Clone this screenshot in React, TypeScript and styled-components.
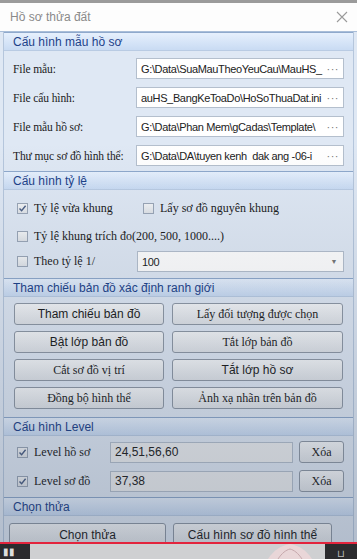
import React from 'react';
import styled, { createGlobalStyle } from 'styled-components';

const GlobalStyle = createGlobalStyle`
  html, body {
    margin: 0;
    padding: 0;
    background: #8a8f96;
  }
  * {
    box-sizing: border-box;
  }
`;

const sans = `"Liberation Sans", "Open Sans", Arial, sans-serif`;
const serif = `"Liberation Serif", "DejaVu Serif", "Times New Roman", serif`;

const Window = styled.div`
  width: 357px;
  height: 559px;
  overflow: hidden;
  position: relative;
  background: #dfe8f4;
  border-top: 3px solid #9b9b9b;
  display: flex;
  flex-direction: column;
`;

const TitleBar = styled.div`
  height: 29px;
  flex: none;
  background: #fdfdfd;
  display: flex;
  align-items: center;
  justify-content: space-between;
  padding: 0 8px 0 10px;
  border-bottom: 1px solid #a9bed9;
`;

const Title = styled.span`
  font-family: ${sans};
  font-size: 12px;
  color: #8a8a8a;
`;

const Close = styled.svg`
  width: 14px;
  height: 14px;
`;

const Form = styled.div`
  flex: 1;
  display: flex;
  flex-direction: column;
  margin: 0 3px;
  border-left: 1px solid #b5c6dc;
  border-right: 1px solid #b5c6dc;
`;

const SectionHeader = styled.div`
  height: 19px;
  flex: none;
  display: flex;
  align-items: center;
  padding-left: 9px;
  background: linear-gradient(#e6f0fd, #c9dbf3);
  border-top: 1px solid #8fa9cc;
  border-bottom: 1px solid #b9cbe3;
  font-family: ${sans};
  font-size: 12px;
  color: #1d4289;
`;

const SectionBody = styled.div<{ $pad: string; $gap: number }>`
  display: flex;
  flex-direction: column;
  gap: ${({ $gap }) => $gap}px;
  padding: ${({ $pad }) => $pad};
`;

const FieldRow = styled.div`
  display: grid;
  grid-template-columns: 123px 1fr;
  align-items: center;
`;

const Label = styled.span`
  font-family: ${serif};
  font-size: 11.5px;
  color: #1b1b1b;
  white-space: nowrap;
  letter-spacing: -0.1px;
`;

const TextBox = styled.div<{ $grey?: boolean }>`
  height: 21px;
  display: flex;
  align-items: center;
  justify-content: space-between;
  padding: 0 4px 0 4px;
  background: ${({ $grey }) => ($grey ? '#eceef0' : '#ffffff')};
  border: 1px solid #b4bfcd;
  font-family: ${sans};
  font-size: ${({ $grey }) => ($grey ? '12px' : '11px')};
  letter-spacing: ${({ $grey }) => ($grey ? '0' : '-0.35px')};
  color: #222;
  overflow: hidden;
  white-space: pre;
`;

const BoxText = styled.span`
  overflow: hidden;
  flex: 1;
`;

const Dots = styled.span`
  color: #777;
  font-size: 11px;
  padding-left: 3px;
  letter-spacing: 0.5px;
`;

const Arrow = styled.span`
  color: #777;
  font-size: 7px;
  padding-right: 2px;
`;

const CheckRow = styled.div<{ $cols?: string; $mt?: number }>`
  display: grid;
  grid-template-columns: ${({ $cols }) => $cols || '1fr'};
  align-items: center;
  min-height: 16px;
  margin-top: ${({ $mt }) => $mt || 0}px;
  padding-left: 13px;
`;

const Check = styled.label`
  display: flex;
  align-items: center;
  gap: 6px;
  font-family: ${serif};
  font-size: 12px;
  color: #1b1b1b;
  white-space: nowrap;
`;

const Box = styled.span`
  width: 11px;
  height: 11px;
  flex: none;
  border: 1px solid #9aa6b7;
  background: linear-gradient(#f2f4f6, #dfe3e8);
  display: flex;
  align-items: center;
  justify-content: center;
`;

const ButtonGrid = styled.div<{ $pad: string }>`
  display: grid;
  grid-template-columns: 150px 171px;
  column-gap: 8px;
  row-gap: 6px;
  padding: ${({ $pad }) => $pad};
`;

const Button = styled.div<{ $serif?: boolean; $h?: number }>`
  height: ${({ $h }) => $h || 22}px;
  display: flex;
  align-items: center;
  justify-content: center;
  background: linear-gradient(#f5f7f9, #dfe3e8);
  border: 1px solid #8f99a6;
  border-radius: 3px;
  font-family: ${({ $serif }) => ($serif ? serif : sans)};
  font-size: 12px;
  color: #1b1b1b;
  white-space: nowrap;
`;

const LevelRow = styled.div`
  display: grid;
  grid-template-columns: 87px 183px 45px;
  column-gap: 6px;
  align-items: center;
  padding-left: 13px;
`;

const BottomButtons = styled.div`
  display: grid;
  grid-template-columns: 157px 159px;
  column-gap: 7px;
  padding: 7px 0 0 5px;
`;

const Shade = styled.div`
  position: absolute;
  inset: 0;
  pointer-events: none;
  background: linear-gradient(rgba(40, 55, 80, 0) 25%, rgba(40, 55, 80, 0.25) 100%);
`;

const PlayerBar = styled.div`
  position: absolute;
  left: 0;
  right: 0;
  bottom: 0;
  height: 17px;
  background: #2b2b2e;
  border-top: 2px solid #e3243d;
  display: flex;
  align-items: stretch;
`;

const PlayerLeft = styled.div`
  width: 30px;
  display: flex;
  align-items: center;
  padding-left: 3px;
  color: #ddd;
  font-size: 10px;
  font-family: ${sans};
`;

const PlayerMid = styled.div`
  width: 295px;
  background: #cfd0d2;
  overflow: hidden;
`;

const PlayerRight = styled.div`
  flex: 1;
  display: flex;
  align-items: flex-end;
  justify-content: center;
  color: #bbb;
  font-size: 10px;
  font-family: ${sans};
`;

const Tick = () => (
  <svg width="9" height="9" viewBox="0 0 9 9">
    <path d="M1.5 4.6 L3.6 6.8 L7.6 1.8" fill="none" stroke="#4b5f85" strokeWidth="1.4" />
  </svg>
);

const CheckBox: React.FC<{ checked?: boolean; children: React.ReactNode }> = ({ checked, children }) => (
  <Check>
    <Box>{checked && <Tick />}</Box>
    {children}
  </Check>
);

const files = [
  { label: 'File mẫu:', value: 'G:\\Data\\SuaMauTheoYeuCau\\MauHS_' },
  { label: 'File cấu hình:', value: 'auHS_BangKeToaDo\\HoSoThuaDat.ini' },
  { label: 'File mẫu hồ sơ:', value: 'G:\\Data\\Phan Mem\\gCadas\\Template\\' },
  { label: 'Thư mục sơ đồ hình thể:', value: 'G:\\Data\\DA\\tuyen kenh  dak ang -06-i' },
];

const mapButtons = [
  { text: 'Tham chiếu bản đồ', serif: false },
  { text: 'Lấy đối tượng được chọn', serif: true },
  { text: 'Bật lớp bản đồ', serif: false },
  { text: 'Tắt lớp bản đồ', serif: true },
  { text: 'Cắt sơ đồ vị trí', serif: true },
  { text: 'Tắt lớp hồ sơ', serif: false },
  { text: 'Đồng bộ hình thể', serif: true },
  { text: 'Ảnh xạ nhãn trên bản đồ', serif: true },
];

const levels = [
  { label: 'Level hồ sơ', value: '24,51,56,60' },
  { label: 'Level sơ đồ', value: '37,38' },
];

export default function App() {
  return (
    <>
      <GlobalStyle />
      <Window>
        <TitleBar>
          <Title>Hồ sơ thửa đất</Title>
          <Close viewBox="0 0 14 14">
            <path d="M2 2 L12 12 M12 2 L2 12" stroke="#9a9a9a" strokeWidth="1.1" />
          </Close>
        </TitleBar>
        <Form>
          <SectionHeader>Cấu hình mẫu hồ sơ</SectionHeader>
          <SectionBody $pad="7px 9px 5px 9px" $gap={8}>
            {files.map((f) => (
              <FieldRow key={f.label}>
                <Label>{f.label}</Label>
                <TextBox>
                  <BoxText>{f.value}</BoxText>
                  <Dots>···</Dots>
                </TextBox>
              </FieldRow>
            ))}
          </SectionBody>

          <SectionHeader>Cấu hình tỷ lệ</SectionHeader>
          <SectionBody $pad="10px 9px 6px 0" $gap={12}>
            <CheckRow $cols="126px 1fr">
              <CheckBox checked>Tỷ lệ vừa khung</CheckBox>
              <CheckBox>Lấy sơ đồ nguyên khung</CheckBox>
            </CheckRow>
            <CheckRow>
              <CheckBox>Tỷ lệ khung trích đo(200, 500, 1000....)</CheckBox>
            </CheckRow>
            <CheckRow $cols="120px 1fr" $mt={-5}>
              <CheckBox>Theo tỷ lệ 1/</CheckBox>
              <TextBox>
                <BoxText>100</BoxText>
                <Arrow>▼</Arrow>
              </TextBox>
            </CheckRow>
          </SectionBody>

          <SectionHeader>Tham chiếu bản đồ xác định ranh giới</SectionHeader>
          <ButtonGrid $pad="6px 0 8px 10px">
            {mapButtons.map((b) => (
              <Button key={b.text} $serif={b.serif}>
                {b.text}
              </Button>
            ))}
          </ButtonGrid>

          <SectionHeader>Cấu hình Level</SectionHeader>
          <SectionBody $pad="5px 0 5px 0" $gap={7}>
            {levels.map((l) => (
              <LevelRow key={l.label}>
                <CheckBox checked>{l.label}</CheckBox>
                <TextBox $grey>
                  <BoxText>{l.value}</BoxText>
                </TextBox>
                <Button $serif>Xóa</Button>
              </LevelRow>
            ))}
          </SectionBody>

          <SectionHeader>Chọn thửa</SectionHeader>
          <BottomButtons>
            <Button $h={24}>Chọn thửa</Button>
            <Button $h={24}>Cấu hình sơ đồ hình thể</Button>
          </BottomButtons>
        </Form>
        <Shade />
        <PlayerBar>
          <PlayerLeft>▮▮</PlayerLeft>
          <PlayerMid>
            <svg width="295" height="15" viewBox="0 0 295 15">
              <path d="M238 15 C244 6 250 2 260 0 C270 2 276 6 282 15 Z" fill="#e9d6d8" />
              <path d="M248 15 C252 9 256 6 260 5 C264 6 268 9 272 15" fill="none" stroke="#c7a9ad" strokeWidth="1" />
            </svg>
          </PlayerMid>
          <PlayerRight>⊔</PlayerRight>
        </PlayerBar>
      </Window>
    </>
  );
}
